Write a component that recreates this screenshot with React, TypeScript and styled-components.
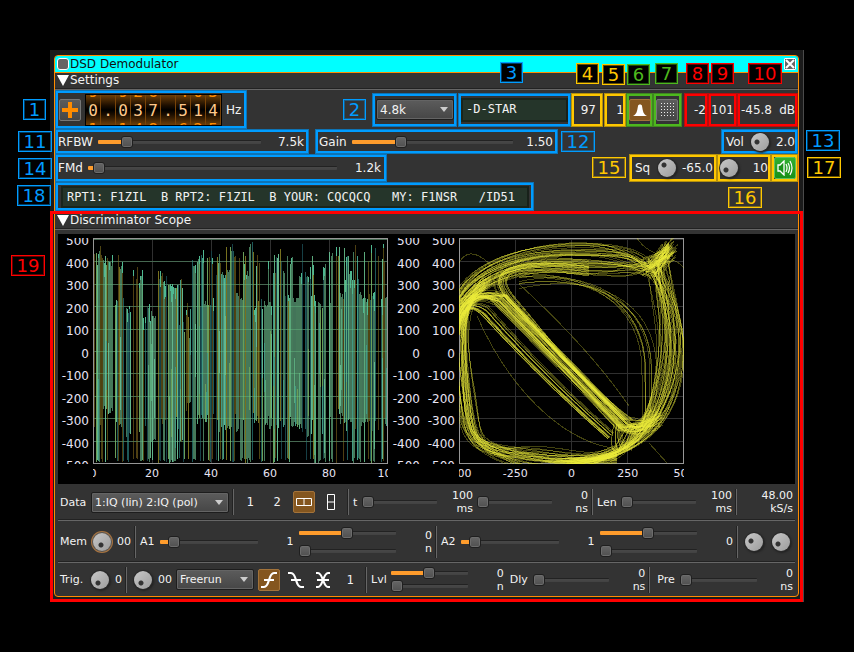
import React from "react";
import styled, { createGlobalStyle, css } from "styled-components";

const BLUE = "#009cff";
const YELLOW = "#ffc800";
const GREEN = "#4db81e";
const RED = "#ff0000";
const ORANGE = "#ff9c2c";

const GlobalStyle = createGlobalStyle`
  * { box-sizing: border-box; }
  body {
    margin: 0;
    background: #000;
    color: #f2f2f2;
    font: 12px/16px "DejaVu Sans", sans-serif;
  }
  button, input, select { font: inherit; color: inherit; margin: 0; }
`;

/* ---------- window ---------- */

const Frame = styled.main`
  margin: 50px;
  padding: 5px 4px 5px 4px;
  background: #1b1b1b;
  border-right: 1px solid #4a4a4a;
`;

const Panel = styled.div`
  border: 1px solid #ff8c00;
  border-radius: 4px;
  background: #333;
`;

const TitleBar = styled.header`
  display: flex;
  align-items: center;
  height: 17px;
  padding: 0 2px;
  gap: 1px;
  color: #111;
  background: #0ff;
  border-bottom: 1px solid #ff8c00;
  border-radius: 3px 3px 0 0;
`;

const TitleText = styled.h1`
  flex: 1;
  margin: 0;
  font-size: 12px;
  font-weight: 400;
`;

const TitleButton = styled.button<{ $round?: boolean }>`
  display: flex;
  align-items: center;
  justify-content: center;
  width: 12px;
  height: 12px;
  padding: 0;
  border: 1px solid #fff;
  border-radius: ${(p) => (p.$round ? 3 : 1)}px;
  background: #666;
`;

const SectionHeader = styled.h2<{ $lower?: boolean }>`
  display: flex;
  align-items: center;
  gap: 1px;
  height: ${(p) => (p.$lower ? 19 : 17)}px;
  margin: 0;
  padding: 0 2px ${(p) => (p.$lower ? 0 : 2)}px;
  font-size: 12px;
  font-weight: 400;
  border-bottom: 1px solid #666;
  box-shadow: inset 0 -1px #222;
`;

const Triangle = () => (
  <svg width="12" height="11" viewBox="0 0 12 11" aria-hidden="true">
    <path d="M0 0H12L6 11Z" fill="#fff" />
  </svg>
);

/* ---------- annotations ---------- */

const Callout = styled.div<{ $color: string; $width?: number; $grow?: number; $height?: number }>`
  position: relative;
  display: flex;
  align-items: center;
  flex: ${(p) => (p.$grow ? `${p.$grow} 1 0` : `0 0 ${p.$width}px`)};
  min-width: 0;
  height: ${(p) => (p.$height ? `${p.$height}px` : "100%")};
  border: 3px solid ${(p) => p.$color};
  outline: 1px solid rgba(40, 40, 40, 0.35);
  outline-offset: -1px;
  white-space: nowrap;
`;

const Tag = styled.span<{ $color: string; $left: number; $top: number; $wide?: boolean }>`
  position: absolute;
  z-index: 2;
  left: ${(p) => p.$left}px;
  top: ${(p) => p.$top}px;
  width: ${(p) => (p.$wide ? 34 : 23)}px;
  height: 21px;
  border: 1px solid ${(p) => p.$color};
  box-shadow: inset 0 0 0 1px ${(p) => p.$color}66;
  background: #000;
  color: ${(p) => p.$color};
  font-size: 18px;
  line-height: 20px;
  text-align: center;
`;

const PlainTag = styled(Tag)`
  background: transparent;
`;

const ScopeSection = styled.section`
  position: relative;
`;

const ScopeOutline = styled.div`
  position: absolute;
  inset: 0 -5px -6px -5px;
  border: 3px solid ${RED};
  pointer-events: none;
`;

/* ---------- shared controls ---------- */

const Row = styled.div<{ $h: number }>`
  display: flex;
  align-items: center;
  height: ${(p) => p.$h}px;
`;

const Spacer = styled.div<{ $grow?: number }>`
  flex: ${(p) => p.$grow ?? 1} 1 0;
`;

const Gap = styled.div<{ $w: number }>`
  flex: 0 0 ${(p) => p.$w}px;
`;

const Value = styled.output<{ $w: number; $pad?: number }>`
  flex: 0 0 ${(p) => p.$w}px;
  padding-right: ${(p) => p.$pad ?? 0}px;
  text-align: right;
`;

const Range = styled.input.attrs({ type: "range", min: 0, max: 100 })<{ $at: number }>`
  appearance: none;
  display: block;
  flex: 1 1 0;
  width: 100%;
  min-width: 0;
  height: 12px;
  background: transparent;
  &::-webkit-slider-runnable-track {
    height: 4px;
    border-radius: 1px;
    background: ${(p) =>
      `linear-gradient(to right, ${ORANGE} ${p.$at}%, transparent ${p.$at}%), linear-gradient(#222 1px, #484848 1px, #424242)`};
  }
  &::-webkit-slider-thumb {
    appearance: none;
    width: 12px;
    height: 12px;
    margin-top: -4px;
    border: 1px solid #1f1f1f;
    border-radius: 3px;
    background: linear-gradient(#666, #505050);
    box-shadow: inset 0 0 0 1px #6c6c6c;
  }
`;

const Slider = ({ label, at }: { label: string; at: number }) => (
  <Range aria-label={label} defaultValue={at} $at={at} />
);

const KnobInput = styled.input.attrs({ type: "range", min: 0, max: 100 })<{
  $x: number;
  $y: number;
  $ring?: boolean;
}>`
  appearance: none;
  flex: 0 0 18px;
  width: 18px;
  height: 18px;
  border-radius: 50%;
  background: radial-gradient(circle at ${(p) => p.$x}px ${(p) => p.$y}px, #333 0 2px, transparent 3px),
    linear-gradient(135deg, #c8c8c8, #9c9c9c);
  box-shadow: ${(p) => (p.$ring ? "0 0 0 1px #555, 0 0 0 2px #a87440" : "0 0 0 1px #292929, 1px 1px 2px 1px #222")};
  &::-webkit-slider-runnable-track,
  &::-webkit-slider-thumb {
    appearance: none;
    opacity: 0;
  }
`;

const SelectBox = styled.span<{ $w: number }>`
  display: grid;
  align-items: center;
  flex: 0 0 ${(p) => p.$w}px;
  svg {
    grid-area: 1 / 1;
    justify-self: end;
    margin-right: 6px;
    pointer-events: none;
  }
`;

const SelectControl = styled.select`
  grid-area: 1 / 1;
  appearance: none;
  width: 100%;
  height: 21px;
  padding: 0 3px;
  border: 1px solid #1d1d1d;
  border-radius: 2px;
  background: linear-gradient(#5c5c5c, #464646);
  box-shadow: inset 0 0 0 1px #646464;
`;

const Select = ({ label, value, width }: { label: string; value: string; width: number }) => (
  <SelectBox $w={width}>
    <SelectControl aria-label={label} defaultValue={value}>
      <option>{value}</option>
    </SelectControl>
    <svg width="8" height="5" viewBox="0 0 8 5" aria-hidden="true">
      <path d="M0 0H8L4 5Z" fill="#ccc" />
    </svg>
  </SelectBox>
);

const ToolButton = styled.button<{ $look?: "on" | "off" | "green" }>`
  display: flex;
  align-items: center;
  justify-content: center;
  flex: 0 0 22px;
  width: 22px;
  height: 22px;
  padding: 0;
  border: 1px solid transparent;
  border-radius: 2px;
  background: transparent;
  ${(p) => p.$look === "on" && css`background: #84561f; border-color: #a3733a;`}
  ${(p) => p.$look === "off" && css`background: linear-gradient(#5c5c5c, #464646); border-color: #777;`}
  ${(p) => p.$look === "green" && css`background: linear-gradient(#30b030, #189018); border-color: #60c060;`}
`;

const FlatButton = styled.button`
  flex: 0 0 22px;
  height: 22px;
  padding: 0;
  border: 0;
  background: transparent;
  font: 12px/16px "DejaVu Sans Mono", monospace;
`;

/* ---------- settings ---------- */

const Dial = styled.output`
  display: flex;
  height: 32px;
  border: 1px solid #000;
  background: #2a1600;
`;

const Digit = styled.span`
  display: flex;
  flex-direction: column;
  justify-content: center;
  width: 15px;
  height: 30px;
  padding-top: 2px;
  overflow: hidden;
  border-right: 1px solid #7a4408;
  background: linear-gradient(#6e3f08, #1c0e00 35%, #000 50%, #1c0e00 65%, #6e3f08);
  font: 16px/19px "DejaVu Sans Mono", monospace;
  text-align: center;
  color: #ffc98a;
`;

const Neighbour = styled.span`
  flex: 0 0 19px;
  color: #ff8c00;
`;

const Current = styled.span`
  flex: 0 0 19px;
`;

const DialGroup = styled.div`
  display: flex;
  align-items: center;
  padding-left: 1px;
  gap: 4px;
`;

const Lcd = styled.output<{ $pad: number; $h: number }>`
  flex: 1;
  height: ${(p) => p.$h}px;
  padding-left: ${(p) => p.$pad}px;
  border: 2px solid #1a251c;
  border-right-color: #18211a;
  background: #25352a;
  font: 12px/18px "DejaVu Sans Mono", monospace;
  white-space: pre;
  overflow: hidden;
`;

const Padded = styled.label<{ $r?: number }>`
  margin-right: ${(p) => p.$r ?? 5}px;
`;

const FREQUENCY = "0.037.514";

const FrequencyDial = () => (
  <Dial>
    {FREQUENCY.split("").map((c, i) => {
      const n = Number(c);
      const isDot = c === ".";
      return (
        <Digit key={i}>
          <Neighbour>{isDot ? "\u00a0" : (n + 9) % 10}</Neighbour>
          <Current>{c}</Current>
          <Neighbour>{isDot ? "\u00a0" : (n + 1) % 10}</Neighbour>
        </Digit>
      );
    })}
  </Dial>
);

const GRID_DOTS = [0, 1, 2, 3, 4].flatMap((x) => [0, 1, 2, 3, 4].map((y) => [x, y]));

/* ---------- plots ---------- */

const PlotArea = styled.div`
  display: flex;
  height: 250px;
  margin: 4px 3px 0;
  padding-top: 4px;
  background: #000;
  color: #e8e4f4;
`;

const YAxis = styled.div<{ $w: number; $pad: number }>`
  flex: 0 0 ${(p) => p.$w}px;
  height: 226px;
  padding-right: ${(p) => p.$pad}px;
  overflow: hidden;
`;

const YTicks = styled.div`
  display: flex;
  flex-direction: column;
  justify-content: space-between;
  height: 241px;
  margin-top: -5px;
  text-align: right;
  line-height: 16px;
`;

const PlotColumn = styled.div<{ $grow: number }>`
  flex: ${(p) => p.$grow} 1 0;
  min-width: 0;
`;

const PlotSvg = styled.svg`
  display: block;
  width: 100%;
  height: 226px;
`;

const XAxis = styled.div`
  overflow: hidden;
`;

const XTicks = styled.div`
  display: flex;
  justify-content: space-between;
  margin: 0 -20px;
  font-size: 11px;
  line-height: 20px;
  span { flex: 0 0 40px; text-align: center; }
`;

const Y_VALUES = [500, 400, 300, 200, 100, 0, -100, -200, -300, -400, -500];

const VerticalAxis = ({ width, pad }: { width: number; pad: number }) => (
  <YAxis $w={width} $pad={pad}>
    <YTicks>
      {Y_VALUES.map((v) => (
        <span key={v}>{v}</span>
      ))}
    </YTicks>
  </YAxis>
);

const HorizontalAxis = ({ values }: { values: number[] }) => (
  <XAxis>
    <XTicks>
      {values.map((v) => (
        <span key={v}>{v}</span>
      ))}
    </XTicks>
  </XAxis>
);

function makeRandom(seed: number) {
  let s = seed;
  return () => {
    s = (s * 1664525 + 1013904223) >>> 0;
    return s / 4294967296;
  };
}

/* end x, highest peak, usual top, usual bottom */
const ENVELOPE = [
  [9, 6, 14, 188], [20, 8, 18, 178], [25, 9, 56, 188], [30, 10, 22, 190], [38, 56, 66, 196],
  [42, 20, 26, 200], [50, 22, 36, 205], [62, 62, 70, 200], [72, 24, 30, 188], [86, 32, 42, 190],
  [92, 34, 80, 204], [98, 60, 90, 170], [105, 16, 40, 190], [122, 6, 58, 184], [128, 10, 26, 190],
  [140, 0, 30, 190], [152, 8, 52, 190], [160, 0, 26, 192], [166, 6, 58, 184], [180, 12, 58, 190],
  [192, 6, 26, 190], [204, 10, 50, 190], [216, 0, 28, 196], [228, 8, 56, 192], [238, 12, 60, 192],
  [252, 0, 50, 185], [266, 2, 30, 190], [282, 4, 50, 192], [296, 2, 55, 188],
];
const FILL = ["#45795a", "#45795a", "#437459"];
const LIT = ["#63b68d", "#6a9e58", "#419983", "#5aa97b"];
const DIM = ["#4e3f12", "#163f45", "#77701e", "#4e4512", "#1d5858"];

const waveform = (() => {
  const rnd = makeRandom(421);
  const lines: { x: number; a: number; b: number; c: string }[] = [];
  let x = 0;
  while (x < 295) {
    const [, peak, top, bottom] = ENVELOPE.find((e) => x < e[0]) ?? ENVELOPE[ENVELOPE.length - 1];
    const k = rnd();
    if (k < 0.17) {
      x += rnd() < 0.3 ? 2 : 1;
      continue;
    }
    const set = k < 0.4 ? FILL : k < 0.68 ? LIT : DIM;
    const c = set[Math.floor(rnd() * set.length)];
    const run = set === FILL ? 1 + Math.floor(rnd() * 3) : 1;
    const reaching = rnd() < (set === FILL ? 0.3 : 0.6);
    const falling = rnd() < (set === FILL ? 0.3 : 0.55);
    const a = reaching ? peak + rnd() * 18 : top + rnd() * 10;
    const b = falling ? 225 : bottom + (rnd() - 0.6) * 16;
    for (let i = 0; i < run && x < 295; i++, x++) {
      const rise = rnd() * 5;
      lines.push({ x, a: a + rise, b: Math.min(225, b - rise), c });
      if (set !== DIM && rnd() < 0.3) {
        const split = 70 + rnd() * 90;
        lines.push({ x, a: split, b: Math.min(b, split + 40 + rnd() * 60), c: LIT[Math.floor(rnd() * 4)] });
      }
      if (rnd() < 0.22) lines.push({ x, a: a + rise, b: a + 6 + rnd() * 14, c: "#4fb890" });
    }
  }
  return lines;
})();

const trajectories = (() => {
  const rnd = makeRandom(19);
  const j = (r: number) => (rnd() + rnd() - 1) * r;
  const flat = (r: number) => (rnd() * 2 - 1) * r;
  const p = (x: number, y: number) => `${x.toFixed(1)} ${y.toFixed(1)}`;
  const out: string[] = [];
  /* upper arc */
  for (let i = 0; i < 44; i++) {
    const d = flat(13);
    out.push(
      `M${p(0, 66 + d + j(10))}C${p(16, 38 + d + j(8))} ${p(58, 20 + d)} ${p(110, 21 + d * 1.3)}S${p(172 + j(18), 24 + d + j(12))} ${p(192 + j(14), 30 + j(12))}L${p(211 + j(9), 14 + j(14))}`
    );
  }
  /* diagonal, dense core */
  for (let i = 0; i < 50; i++) {
    const d = flat(11);
    const e = d * 0.6 + j(10);
    out.push(
      `M${p(j(4), 82 + j(26))}C${p(7 + j(6), 58 + j(10))} ${p(26 + j(8), 54 + j(10))} ${p(42 + d / 2, 62 - d / 2)}L${p(164 + e / 2, 188 - e / 2)}Q${p(178 + j(8), 196 + j(12))} ${p(198 + j(12), 178 + j(16))}`
    );
  }
  /* diagonal, loose lower side */
  for (let i = 0; i < 18; i++) {
    const d = rnd() * 15;
    out.push(
      `M${p(0, 90 + j(12))}C${p(5, 66)} ${p(14, 60 + d / 2)} ${p(30 - d / 3, 66 + d)}Q${p(92 - d / 2, 138 + d / 2)} ${p(156 - d / 2, 194 + d / 2)}`
    );
  }
  /* inner hook joining arc and diagonal */
  for (let i = 0; i < 20; i++) {
    const d = flat(8);
    out.push(`M${p(130, 30 + d)}C${p(60, 20 + d)} ${p(22 + d, 30)} ${p(50 + d, 62)}S${p(112 + j(8), 128 + d)} ${p(166 + d, 182)}`);
  }
  /* left and lower edges */
  for (let i = 0; i < 42; i++) {
    const d = rnd() * 14;
    out.push(
      `M${p(28 + j(10), 44 + j(10))}C${p(d - 9 + j(3), 62)} ${p(d - 7, 100)} ${p(d + j(6) - 2, 150)}S${p(6 + d + j(8), 208 + j(14))} ${p(54 + j(10), 218 + j(12))}S${p(120, 222 + j(8))} ${p(158, 217 + j(12))}`
    );
  }
  /* right edge */
  for (let i = 0; i < 48; i++) {
    const d = flat(13);
    out.push(
      `M${p(105 + j(30), 225 + j(8))}C${p(160, 224 + j(10))} ${p(192 + d + j(8), 204 + j(10))} ${p(206 + d, 150 + j(12))}S${p(206 + d + j(8), 60 + j(16))} ${p(198 + j(16), 28 + j(12))}L${p(211 + j(9), 9 + j(12))}`
    );
  }
  for (let i = 0; i < 8; i++) {
    const d = j(9);
    out.push(`M${p(60, 44 + d)}C${p(130 + d, 34 + j(8))} ${p(190 + d, 62)} ${p(191 + d, 130)}S${p(188, 180)} ${p(170, 187 + d)}`);
  }
  for (let i = 0; i < 12; i++) {
    const d = j(6);
    out.push(`M${p(160 + d, 186)}Q${p(156 + d, 204 + j(4))} ${p(164 + d * 2, 212)}L${p(174 + d, 188)}`);
  }
  out.push("M18 78C50 150 100 200 152 210", "M60 46Q130 110 170 168", "M190 205L208 225", "M0 25C10 5 30 22 40 38", "M178 0C190 20 214 16 225 30");
  return out;
})();

const gridPath = (w: number, columns: number[]) =>
  Array.from({ length: 10 }, (_, i) => `M0 ${Math.round(1 + i * 22.4) + 0.5}H${w}`).join("") +
  columns.map((x) => `M${x + 0.5} 0V225`).join("");

const WavePlot = () => (
  <PlotSvg viewBox="0 0 295 226" preserveAspectRatio="none" shapeRendering="crispEdges" role="img" aria-label="Waveform">
    <path d={gridPath(295, [59, 118, 177, 236])} stroke="#303030" fill="none" />
    {waveform.map((l, i) => (
      <path key={i} d={`M${l.x + 0.5} ${l.a.toFixed(0)}V${l.b.toFixed(0)}`} stroke={l.c} />
    ))}
    <path d={gridPath(295, [])} stroke="#70d090" strokeOpacity="0.35" fill="none" />
    <rect x="0.5" y="0.5" width="294" height="225" fill="none" stroke="#969696" />
  </PlotSvg>
);

const PhasePlot = () => (
  <PlotSvg viewBox="0 0 225 226" preserveAspectRatio="none" shapeRendering="crispEdges" role="img" aria-label="Phase trajectory">
    <path d={gridPath(225, [56, 112, 168])} stroke="#303030" fill="none" />
    <rect x="0.5" y="0.5" width="224" height="225" fill="none" stroke="#969696" />
    <g fill="none" stroke="#eeee3a" strokeOpacity="0.28">
      {trajectories.map((d, i) => (
        <path key={i} d={d} />
      ))}
    </g>
  </PlotSvg>
);

/* ---------- scope controls ---------- */

const ControlRow = styled.div<{ $h: number; $last?: boolean }>`
  display: flex;
  align-items: center;
  height: ${(p) => p.$h}px;
  margin: 0 3px;
  padding: 0 2px;
  font-size: 11px;
  line-height: 13px;
  white-space: nowrap;
  border-bottom: ${(p) => (p.$last ? "0" : "1px solid #666")};
  box-shadow: ${(p) => (p.$last ? "none" : "inset 0 -1px #222")};
`;

const Divider = styled.div<{ $h: number }>`
  flex: 0 0 2px;
  height: ${(p) => p.$h}px;
  margin: 0 4px 0 3px;
  border-left: 1px solid #222;
  border-right: 1px solid #666;
`;

const Stack = styled.div<{ $gap: number }>`
  display: flex;
  flex-direction: column;
  flex: 1 1 0;
  min-width: 0;
  gap: ${(p) => p.$gap}px;
  input { flex: none; }
`;

const Name = styled.label<{ $w: number }>`
  flex: 0 0 ${(p) => p.$w}px;
`;

const Curve = ({ d }: { d: string }) => (
  <svg width="18" height="18" viewBox="0 0 18 18" aria-hidden="true">
    <path d={d} fill="none" stroke="#fff" strokeWidth="2.2" />
  </svg>
);

const RISING = "M1 16H4C10 16 8 2 14 2H17M4 9H14";
const FALLING = "M1 2H4C10 2 8 16 14 16H17M4 9H14";
const BOTH = "M2 2H4C9 2 9 16 14 16H16M2 16H4C9 16 9 2 14 2H16M3 9H15";

const Two = ({ w, a, b }: { w: number; a: string; b: string }) => (
  <Value $w={w}>
    {a}
    <br />
    {b}
  </Value>
);

export default function App() {
  return (
    <>
      <GlobalStyle />
      <Frame>
        <Panel>
          <TitleBar>
            <TitleButton $round aria-label="Channel settings" />
            <TitleText>DSD Demodulator</TitleText>
            <TitleButton aria-label="Close">
              <svg width="10" height="10" viewBox="0 0 10 10" aria-hidden="true">
                <path d="M1 1L9 9M9 1L1 9" stroke="#fff" strokeWidth="2" />
              </svg>
            </TitleButton>
          </TitleBar>

          <section>
            <SectionHeader>
              <Triangle />
              Settings
            </SectionHeader>

            <Row $h={39}>
              <Callout $color={BLUE} $width={192}>
                <Tag $color={BLUE} $left={-35} $top={6}>1</Tag>
                <DialGroup>
                  <ToolButton $look="off" aria-label="Frequency sign">
                    <svg width="16" height="16" viewBox="0 0 16 16" aria-hidden="true">
                      <path d="M8 0V16M0 8H16" stroke="#ff8c00" strokeWidth="4" />
                    </svg>
                  </ToolButton>
                  <FrequencyDial />
                  <span>Hz</span>
                </DialGroup>
              </Callout>
              <Spacer />
              <Callout $color={BLUE} $width={85} $height={34}>
                <PlainTag $color={BLUE} $left={-32} $top={3}>2</PlainTag>
                <Gap $w={1} />
                <Select label="Baud rate" value="4.8k" width={78} />
              </Callout>
              <Gap $w={1} />
              <Callout $color={BLUE} $width={113} $height={34}>
                <Tag $color={BLUE} $left={39} $top={-34}>3</Tag>
                <Lcd $pad={3} $h={24}>-D-STAR</Lcd>
              </Callout>
              <Callout $color={YELLOW} $width={32} $height={34}>
                <Tag $color={YELLOW} $left={2} $top={-33}>4</Tag>
                <Value $w={22}>97</Value>
              </Callout>
              <Gap $w={1} />
              <Callout $color={YELLOW} $width={22} $height={34}>
                <Tag $color={YELLOW} $left={-5} $top={-32}>5</Tag>
                <Value $w={17}>1</Value>
              </Callout>
              <Callout $color={GREEN} $width={27} $height={34}>
                <Tag $color={GREEN} $left={-2} $top={-32}>6</Tag>
                <ToolButton $look="on" aria-label="Symbol synchronisation">
                  <svg width="14" height="12" viewBox="0 0 14 12" aria-hidden="true">
                    <path d="M0 12C4 10 4 7 5 2C5 0 9 0 9 2C10 7 10 10 14 12Z" fill="#fff" />
                  </svg>
                </ToolButton>
              </Callout>
              <Callout $color={GREEN} $width={29} $height={34}>
                <Tag $color={GREEN} $left={-1} $top={-33}>7</Tag>
                <ToolButton $look="off" aria-label="Constellation">
                  <svg width="15" height="15" viewBox="0 0 15 15" aria-hidden="true">
                    {GRID_DOTS.map(([x, y]) => (
                      <rect key={`${x}-${y}`} x={1 + x * 3} y={1 + y * 3} width="1" height="1" fill="#eee" />
                    ))}
                  </svg>
                </ToolButton>
              </Callout>
              <Gap $w={2} />
              <Callout $color={RED} $width={24} $height={34}>
                <Tag $color={RED} $left={-1} $top={-33}>8</Tag>
                <Value $w={19}>-2</Value>
              </Callout>
              <Callout $color={RED} $width={29} $height={34}>
                <Tag $color={RED} $left={0} $top={-33}>9</Tag>
                <Value $w={23}>101</Value>
              </Callout>
              <Callout $color={RED} $width={61} $height={34}>
                <Tag $color={RED} $wide $left={8} $top={-33}>10</Tag>
                <Value $w={32}>-45.8</Value>
                <Spacer />
                <span>dB</span>
              </Callout>
            </Row>

            <Row $h={25}>
              <Callout $color={BLUE} $grow={248}>
                <PlainTag $color={BLUE} $wide $left={-40} $top={-1}>11</PlainTag>
                <Padded>RFBW</Padded>
                <Slider label="RF bandwidth" at={15} />
                <Value $w={45} $pad={2}>7.5k</Value>
              </Callout>
              <Gap $w={6} />
              <Callout $color={BLUE} $grow={237}>
                <PlainTag $color={BLUE} $wide $left={243} $top={-1}>12</PlainTag>
                <Gap $w={1} />
                <Padded>Gain</Padded>
                <Slider label="Gain" at={29} />
                <Value $w={42} $pad={2}>1.50</Value>
              </Callout>
              <Spacer $grow={163} />
              <Callout $color={BLUE} $width={77}>
                <PlainTag $color={BLUE} $wide $left={82} $top={-2}>13</PlainTag>
                <Gap $w={2} />
                <Padded $r={7}>Vol</Padded>
                <KnobInput aria-label="Volume" $x={6} $y={9} />
                <Spacer />
                <Value $w={22}>2.0</Value>
              </Callout>
            </Row>

            <Row $h={28}>
              <Callout $color={BLUE} $grow={326}>
                <PlainTag $color={BLUE} $wide $left={-40} $top={1}>14</PlainTag>
                <Padded>FMd</Padded>
                <Slider label="FM deviation" at={2} />
                <Value $w={47} $pad={3}>1.2k</Value>
              </Callout>
              <Spacer $grow={242} />
              <Callout $color={YELLOW} $width={88}>
                <PlainTag $color={YELLOW} $wide $left={-40} $top={0}>15</PlainTag>
                <Gap $w={3} />
                <Padded $r={8}>Sq</Padded>
                <KnobInput aria-label="Squelch" $x={6} $y={6} />
                <Spacer />
                <Value $w={34} $pad={1}>-65.0</Value>
              </Callout>
              <Callout $color={YELLOW} $width={54}>
                <PlainTag $color={YELLOW} $wide $left={8} $top={30}>16</PlainTag>
                <KnobInput aria-label="Squelch gate" $x={6} $y={11} />
                <Value $w={30}>10</Value>
              </Callout>
              <Callout $color={YELLOW} $width={27}>
                <PlainTag $color={YELLOW} $wide $left={33} $top={0}>17</PlainTag>
                <ToolButton $look="green" aria-label="Audio">
                  <svg width="18" height="16" viewBox="0 0 18 16" aria-hidden="true">
                    <path d="M2 5H4L8 1V15L4 11H2Z" fill="#189018" stroke="#fff" strokeWidth="1.3" />
                    <path d="M10 4Q12 8 10 12M12 3Q15 8 12 13M14 1Q18 8 14 15" fill="none" stroke="#fff" strokeWidth="1.2" />
                  </svg>
                </ToolButton>
              </Callout>
            </Row>

            <Row $h={29}>
              <Callout $color={BLUE} $grow={473}>
                <PlainTag $color={BLUE} $wide $left={-41} $top={0}>18</PlainTag>
                <Gap $w={3} />
                <Lcd $pad={4} $h={22}>{"RPT1: F1ZIL  B RPT2: F1ZIL  B YOUR: CQCQCQ   MY: F1NSR   /ID51"}</Lcd>
                <Gap $w={2} />
              </Callout>
              <Spacer $grow={264} />
            </Row>
          </section>

          <ScopeSection>
            <ScopeOutline />
            <PlainTag $color={RED} $wide $left={-44} $top={44}>19</PlainTag>
            <SectionHeader $lower>
              <Triangle />
              Discriminator Scope
            </SectionHeader>

            <PlotArea>
              <VerticalAxis width={35} pad={4} />
              <PlotColumn $grow={295}>
                <WavePlot />
                <HorizontalAxis values={[0, 20, 40, 60, 80, 100]} />
              </PlotColumn>
              <VerticalAxis width={33} pad={1} />
              <VerticalAxis width={38} pad={4} />
              <PlotColumn $grow={225}>
                <PhasePlot />
                <HorizontalAxis values={[-500, -250, 0, 250, 500]} />
              </PlotColumn>
              <Spacer $grow={111} />
            </PlotArea>

            <ControlRow $h={37}>
              <Name $w={31}>Data</Name>
              <Select label="Data" value="1:IQ (lin) 2:IQ (pol)" width={138} />
              <Divider $h={26} />
              <Gap $w={1} />
              <FlatButton>1</FlatButton>
              <Gap $w={5} />
              <FlatButton>2</FlatButton>
              <Gap $w={5} />
              <ToolButton $look="on" aria-label="Side by side">
                <svg width="16" height="8" viewBox="0 0 16 8" aria-hidden="true">
                  <path d="M0.5 0.5H15.5V7.5H0.5ZM8 0V8" fill="none" stroke="#fff" />
                </svg>
              </ToolButton>
              <Gap $w={5} />
              <ToolButton aria-label="Stacked">
                <svg width="8" height="16" viewBox="0 0 8 16" aria-hidden="true">
                  <path d="M0.5 0.5H7.5V15.5H0.5ZM0 8H8" fill="none" stroke="#fff" />
                </svg>
              </ToolButton>
              <Gap $w={2} />
              <Divider $h={26} />
              <Name $w={9}>t</Name>
              <Slider label="Time" at={0} />
              <Two w={36} a="100" b="ms" />
              <Gap $w={4} />
              <Slider label="Time offset" at={0} />
              <Two w={36} a="0" b="ns" />
              <Divider $h={26} />
              <Name $w={24}>Len</Name>
              <Slider label="Length" at={0} />
              <Two w={36} a="100" b="ms" />
              <Divider $h={26} />
              <Two w={52} a="48.00" b="kS/s" />
            </ControlRow>

            <ControlRow $h={42}>
              <Name $w={33}>Mem</Name>
              <KnobInput aria-label="Memory" $x={8} $y={12} $ring />
              <Value $w={20}>00</Value>
              <Divider $h={32} />
              <Name $w={20}>A1</Name>
              <Slider label="A1 amplitude" at={9} />
              <Value $w={36}>1</Value>
              <Gap $w={5} />
              <Stack $gap={6}>
                <Slider label="A1 offset coarse" at={50} />
                <Slider label="A1 offset fine" at={0} />
              </Stack>
              <Two w={36} a="0" b="n" />
              <Divider $h={32} />
              <Name $w={20}>A2</Name>
              <Slider label="A2 amplitude" at={9} />
              <Value $w={36}>1</Value>
              <Gap $w={5} />
              <Stack $gap={6}>
                <Slider label="A2 offset coarse" at={50} />
                <Slider label="A2 offset fine" at={0} />
              </Stack>
              <Value $w={36}>0</Value>
              <Divider $h={32} />
              <Gap $w={3} />
              <KnobInput aria-label="Trace delay coarse" $x={6} $y={8} />
              <Gap $w={9} />
              <KnobInput aria-label="Trace delay fine" $x={6} $y={11} />
              <Gap $w={3} />
            </ControlRow>

            <ControlRow $h={33} $last>
              <Name $w={31}>Trig.</Name>
              <KnobInput aria-label="Trigger" $x={7} $y={12} />
              <Value $w={13}>0</Value>
              <Divider $h={26} />
              <Gap $w={3} />
              <KnobInput aria-label="Trigger repeats" $x={7} $y={12} />
              <Value $w={20}>00</Value>
              <Gap $w={4} />
              <Select label="Trigger projection" value="Freerun" width={78} />
              <Gap $w={4} />
              <ToolButton $look="on" aria-label="Rising edge"><Curve d={RISING} /></ToolButton>
              <Gap $w={5} />
              <ToolButton aria-label="Falling edge"><Curve d={FALLING} /></ToolButton>
              <Gap $w={5} />
              <ToolButton aria-label="Both edges"><Curve d={BOTH} /></ToolButton>
              <Gap $w={5} />
              <FlatButton>1</FlatButton>
              <Gap $w={1} />
              <Divider $h={26} />
              <Name $w={20}>Lvl</Name>
              <Stack $gap={1}>
                <Slider label="Level coarse" at={50} />
                <Slider label="Level fine" at={0} />
              </Stack>
              <Two w={36} a="0" b="n" />
              <Gap $w={6} />
              <Name $w={23}>Dly</Name>
              <Slider label="Delay" at={0} />
              <Two w={36} a="0" b="ns" />
              <Divider $h={26} />
              <Gap $w={3} />
              <Name $w={23}>Pre</Name>
              <Slider label="Pre-trigger" at={0} />
              <Two w={36} a="0" b="ns" />
            </ControlRow>
          </ScopeSection>
        </Panel>
      </Frame>
    </>
  );
}
